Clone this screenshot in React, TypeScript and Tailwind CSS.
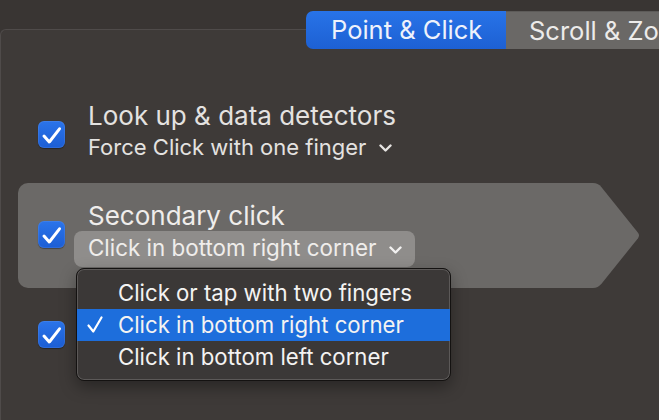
import React from "react";

const font = { fontFamily: "Inter, 'Noto Sans', 'Liberation Sans', sans-serif" };

function Checkbox() {
  return (
    <div className="w-[27px] h-[27px] shrink-0 rounded-[6px] bg-gradient-to-b from-[#2b74ea] to-[#1c5ed4] shadow-[inset_0_0_0_1px_rgba(255,255,255,0.08),0_1px_1px_rgba(0,0,0,0.35)] flex items-center justify-center">
      <svg width="27" height="27" viewBox="0 0 27 27">
        <path d="M6 15 L11.3 21 L21.5 7.8" fill="none" stroke="#ffffff" strokeWidth="3" strokeLinecap="round" strokeLinejoin="round" />
      </svg>
    </div>
  );
}

function Chevron({ color = "#e6e4e2" }: { color?: string }) {
  return (
    <svg width="13" height="8" viewBox="0 0 13 8" className="shrink-0">
      <path d="M1.5 1.5 L6.5 6.5 L11.5 1.5" fill="none" stroke={color} strokeWidth="2.4" strokeLinecap="round" strokeLinejoin="round" />
    </svg>
  );
}

export default function App() {
  return (
    <div className="relative w-[659px] h-[420px] overflow-hidden bg-[#393533] text-[#e4e2e0]" style={font}>
      {/* Tabs */}
      <div className="relative z-10 flex pt-[11px] pl-[306px]">
        <div className="shrink-0 w-[200px] h-[38px] rounded-l-[7px] bg-gradient-to-b from-[#2873e8] to-[#1d60d3] pl-[25px] text-[25.5px] leading-[38px] text-[#eef2fb] whitespace-nowrap">
          Point &amp; Click
        </div>
        <div className="shrink-0 w-[200px] h-[38px] bg-[#6a6866] border-t border-[#5d5b59] pl-[23px] text-[25.5px] leading-[37px] text-[#ecebea] whitespace-nowrap">
          Scroll &amp; Zoom
        </div>
      </div>

      {/* Panel */}
      <div className="-mt-[20px] w-[700px] h-[400px] rounded-tl-[6px] border-t border-l border-[#4f4b4a] bg-[#3e3a38]">
        {/* Row 1 */}
        <div className="flex pl-[37px] mt-[71px]">
          <div className="mt-[20px]">
            <Checkbox />
          </div>
          <div className="ml-[23px] flex flex-col">
            <div className="h-[30px] text-[26px] leading-[30px] whitespace-nowrap">Look up &amp; data detectors</div>
            <div className="mt-[4px] h-[24px] flex items-center text-[22px] leading-[24px] whitespace-nowrap">
              <span>Force Click with one finger</span>
              <span className="ml-[13px] mt-[2px]"><Chevron /></span>
            </div>
          </div>
        </div>

        {/* Row 2 (selected) */}
        <div className="flex ml-[17px] mt-[24px] h-[105px]">
          <div className="w-[573px] h-[105px] rounded-l-[10px] bg-[#6b6967] flex pl-[20px]">
            <div className="mt-[38px]">
              <Checkbox />
            </div>
            <div className="ml-[23px] mt-[18px] flex flex-col text-[#efedeb]">
              <div className="h-[30px] text-[26px] leading-[30px] whitespace-nowrap">Secondary click</div>
              <div className="-ml-[14px] w-[341px] h-[36px] rounded-[8px] bg-[#8f8d8b] pl-[14px] flex items-start">
                <span className="text-[22.4px] leading-[33px] whitespace-nowrap">Click in bottom right corner</span>
                <span className="ml-[13px] mt-[15px]"><Chevron color="#f2f1f0" /></span>
              </div>
            </div>
          </div>
          <svg width="50" height="105" viewBox="0 0 50 105" className="-ml-px shrink-0">
            <path d="M0 0 L3 0 Q8 0 11.5 4.2 L48 49.8 Q50 52.5 48 55.2 L11.5 100.8 Q8 105 3 105 L0 105 Z" fill="#6b6967" />
          </svg>
        </div>

        {/* Row 3 */}
        <div className="flex pl-[37px] mt-[33px]">
          <Checkbox />
        </div>
      </div>

      {/* Popup menu */}
      <div className="absolute left-[76px] top-[268px] w-[375px] h-[113px] rounded-[8px] border border-[#141211] bg-[#3b3837] shadow-[inset_0_0_0_1px_rgba(255,255,255,0.17),0_6px_16px_rgba(0,0,0,0.35)] pt-[8px] text-[22.2px] leading-[32px] text-[#f4f3f2] overflow-hidden">
        <div className="h-[32px] pl-[41px] whitespace-nowrap">Click or tap with two fingers</div>
        <div className="relative h-[32px] pl-[41px] bg-[#1d6edc] whitespace-nowrap">
          <svg width="16" height="18" viewBox="0 0 16 18" className="absolute left-[10px] top-[7px]">
            <path d="M1.5 9.5 L6.3 15.5 L14.5 1.5" fill="none" stroke="#ffffff" strokeWidth="2.2" strokeLinecap="round" strokeLinejoin="round" />
          </svg>
          Click in bottom right corner
        </div>
        <div className="h-[32px] pl-[41px] whitespace-nowrap">Click in bottom left corner</div>
      </div>
    </div>
  );
}
